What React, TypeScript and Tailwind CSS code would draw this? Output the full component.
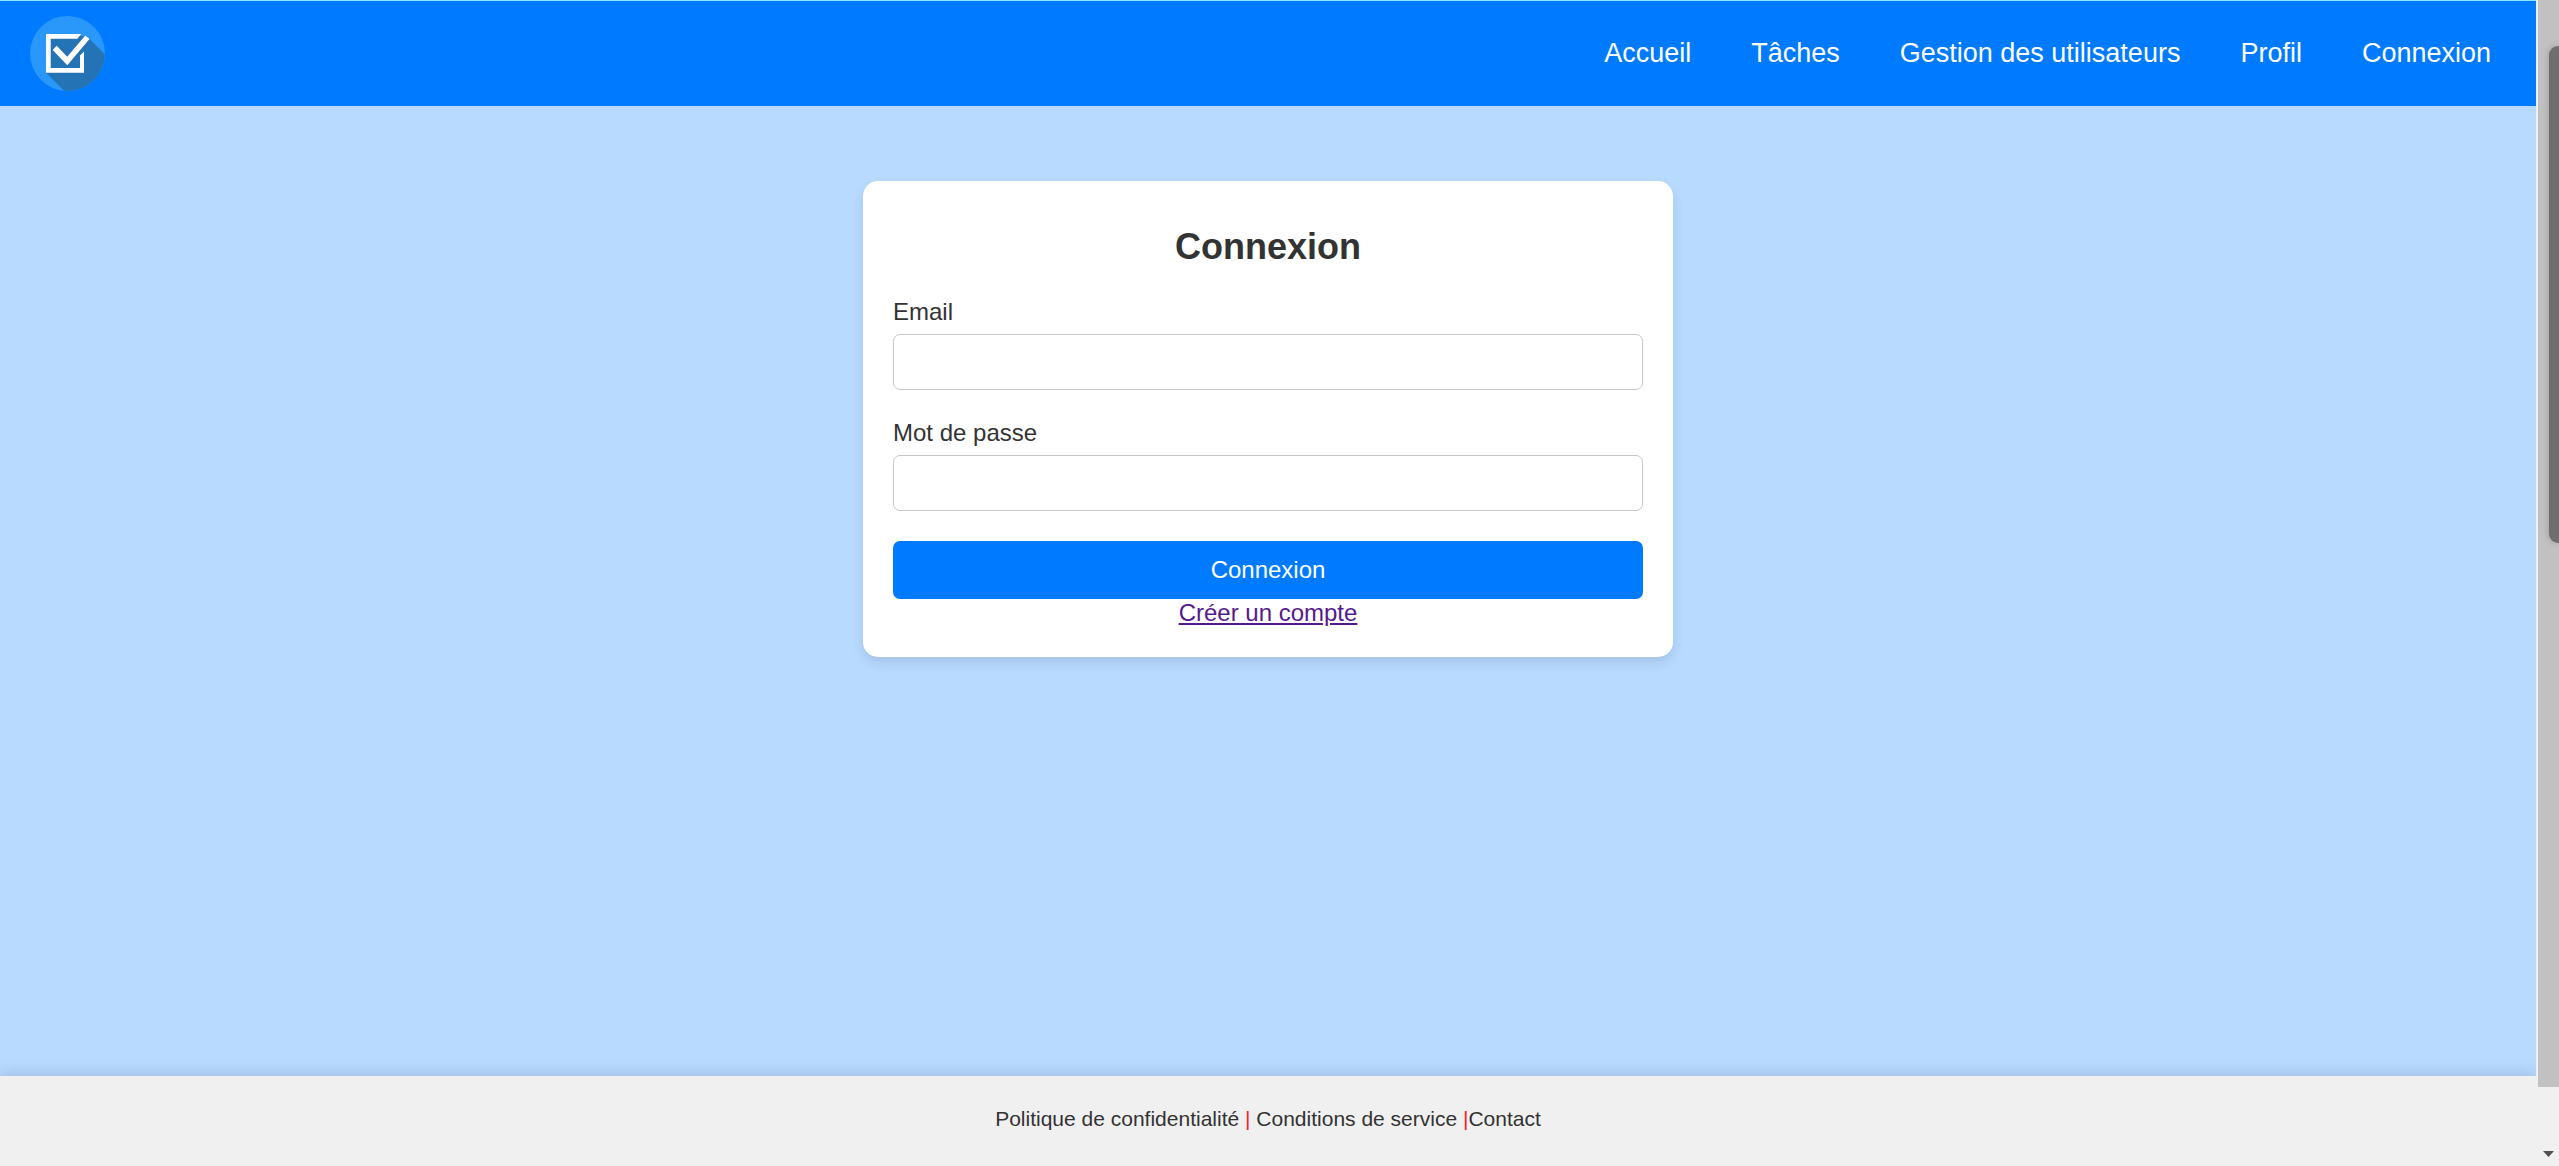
const links = ["Accueil", "Tâches", "Gestion des utilisateurs", "Profil", "Connexion"];

function Logo() {
  return (
    <svg className="size-[75px] shrink-0" viewBox="0 0 75 75" aria-label="Logo">
      <defs>
        <clipPath id="disc">
          <circle cx="37.5" cy="37.5" r="37.5" />
        </clipPath>
      </defs>
      <circle cx="37.5" cy="37.5" r="37.5" fill="#2a98fb" />
      <path clipPath="url(#disc)" d="M18 20H52L59.3 22.7L90 53.4V90H49.3L16 56.7Z" fill="#2474b5" />
      <path d="M51.3 18H16V56.7H54V35.5L50 39.5V52H20.7V22.7H47.3Z" fill="#fff" />
      <path d="M22.7 33.9L26.7 29.8L37.2 40.7L55.3 19.5L59.5 22.9L37.3 49.2Z" fill="#fff" />
    </svg>
  );
}

function Field({ id, label, type }: { id: string; label: string; type: string }) {
  return (
    <div className="mb-[30px]">
      <label htmlFor={id} className="mb-[9px] block h-[26px] leading-[26px]">
        {label}
      </label>
      <input id={id} type={type} className="block h-14 w-full rounded-[7px] border border-[#c8c8c8] bg-white px-3 outline-none" />
    </div>
  );
}

export default function App() {
  return (
    <div className="flex h-[1166px] w-full overflow-hidden bg-[#f0f0f0] font-['Liberation_Sans',Arial,sans-serif] text-2xl text-[#333]">
      <div className="flex w-[2536px] shrink-0 flex-col bg-[#b8daff]">
        <header className="flex h-[106px] shrink-0 items-center justify-between border-t border-[#8fe4ff] bg-[#007bff] pr-[45px] pl-[30px]">
          <Logo />
          <nav className="flex gap-[60px] text-[27px] leading-[31px] text-white">
            {links.map((link) => (
              <a key={link} href="#">
                {link}
              </a>
            ))}
          </nav>
        </header>

        <main className="flex grow items-start justify-center pt-[75px]">
          <form className="h-[476px] w-[810px] rounded-[15px] bg-white px-[30px] pt-[45px] shadow-[0_6px_12px_rgba(0,0,0,0.1)]">
            <h2 className="mb-[32px] text-center text-4xl leading-[41px] font-bold">Connexion</h2>
            <Field id="email" label="Email" type="email" />
            <Field id="password" label="Mot de passe" type="password" />
            <button type="button" className="block h-[58px] w-full rounded-[7px] bg-[#007bff] text-white">
              Connexion
            </button>
            <div className="text-center leading-[27px]">
              <a href="#" className="text-[#551a8b] underline">
                Créer un compte
              </a>
            </div>
          </form>
        </main>

        <footer className="h-[90px] shrink-0 bg-[#f0f0f0] pt-[31px] text-center text-[21px] leading-6 shadow-[0_-3px_15px_rgba(0,0,0,0.12)]">
          <a href="#">Politique de confidentialité</a> <span className="text-[#f5222d]">|</span>{" "}
          <a href="#">Conditions de service</a> <span className="text-[#f5222d]">|</span>
          <a href="#">Contact</a>
        </footer>
      </div>

      <div className="flex w-[23px] shrink-0 flex-col justify-between bg-[#f0f0f0] pb-[9px]">
        <div className="ml-0.5 flex h-[1087px] justify-end bg-[#c1c1c1] pt-[46px]">
          <div className="h-[497px] w-2.5 rounded-l-[9px] bg-[#6e6e6e] shadow-[0_0_7px_rgba(0,0,0,0.2)]" />
        </div>
        <svg className="ml-[7px] h-1.5 w-[11px]" viewBox="0 0 11 6">
          <path d="M0 0H11L5.5 6Z" fill="#505050" />
        </svg>
      </div>
    </div>
  );
}
